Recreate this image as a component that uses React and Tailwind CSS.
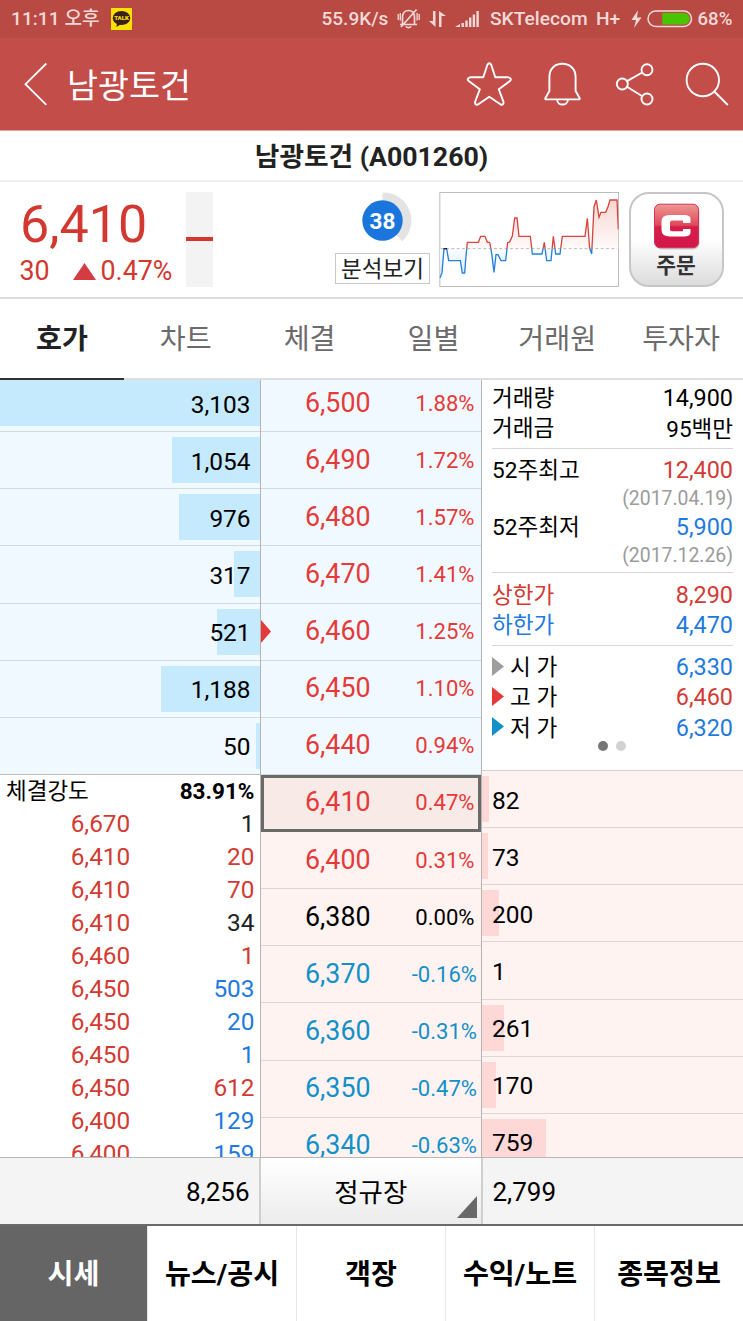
import React from "react";

const RED = "text-[#e53a3a]";
const BLUE = "text-[#1490c8]";
const BLACK = "text-black";

const asks = [
  { qty: "3,103", width: 260 },
  { qty: "1,054", width: 88 },
  { qty: "976", width: 81 },
  { qty: "317", width: 26 },
  { qty: "521", width: 43 },
  { qty: "1,188", width: 99 },
  { qty: "50", width: 4 },
];

const levels = [
  { price: "6,500", pct: "1.88%", color: RED, side: "ask" },
  { price: "6,490", pct: "1.72%", color: RED, side: "ask" },
  { price: "6,480", pct: "1.57%", color: RED, side: "ask" },
  { price: "6,470", pct: "1.41%", color: RED, side: "ask" },
  { price: "6,460", pct: "1.25%", color: RED, side: "ask", marker: true },
  { price: "6,450", pct: "1.10%", color: RED, side: "ask" },
  { price: "6,440", pct: "0.94%", color: RED, side: "ask" },
  { price: "6,410", pct: "0.47%", color: RED, side: "bid", current: true },
  { price: "6,400", pct: "0.31%", color: RED, side: "bid" },
  { price: "6,380", pct: "0.00%", color: BLACK, side: "bid" },
  { price: "6,370", pct: "-0.16%", color: BLUE, side: "bid" },
  { price: "6,360", pct: "-0.31%", color: BLUE, side: "bid" },
  { price: "6,350", pct: "-0.47%", color: BLUE, side: "bid" },
  { price: "6,340", pct: "-0.63%", color: BLUE, side: "bid" },
];

const bids = [
  { qty: "82", width: 7 },
  { qty: "73", width: 6 },
  { qty: "200", width: 17 },
  { qty: "1", width: 0 },
  { qty: "261", width: 22 },
  { qty: "170", width: 14 },
  { qty: "759", width: 64 },
];

const TRADE_RED = "text-[#d23b34]";
const TRADE_BLUE = "text-[#1f7ae0]";
const trades = [
  { price: "6,670", qty: "1", color: "text-[#222]" },
  { price: "6,410", qty: "20", color: TRADE_RED },
  { price: "6,410", qty: "70", color: TRADE_RED },
  { price: "6,410", qty: "34", color: "text-[#222]" },
  { price: "6,460", qty: "1", color: TRADE_RED },
  { price: "6,450", qty: "503", color: TRADE_BLUE },
  { price: "6,450", qty: "20", color: TRADE_BLUE },
  { price: "6,450", qty: "1", color: TRADE_BLUE },
  { price: "6,450", qty: "612", color: TRADE_RED },
  { price: "6,400", qty: "129", color: TRADE_BLUE },
  { price: "6,400", qty: "159", color: TRADE_BLUE },
];

function StatusBar() {
  return (
    <div className="flex h-[38px] shrink-0 items-center bg-[#b84a43] text-[18.600px] font-medium leading-[40px] text-[#f2d9d7]">
      <span className="ml-[11px] w-[92px] shrink-0 whitespace-pre text-[19.200px]">11:11 오후</span>
      <svg className="ml-[8px] shrink-0" width="21" height="22" viewBox="0 0 21 22">
        <rect width="21" height="22" fill="#fae100" />
        <ellipse cx="10.500" cy="10" rx="8.800" ry="7" fill="#3c1e1e" />
        <path d="M6 15l-.6 4 4.600-2.800z" fill="#3c1e1e" />
        <text x="10.500" y="12.300" fontSize="6" fontWeight="900" textAnchor="middle" fill="#fae100" fontFamily="Roboto, sans-serif">TALK</text>
      </svg>
      <span className="ml-[189.500px] w-[69px] shrink-0 text-[19px]">55.9K/s</span>
      <svg className="ml-[6.500px] shrink-0" width="24" height="22" viewBox="0 0 24 22" fill="none" stroke="#f2d9d7" strokeWidth="1.700">
        <path d="M3 16.500h17M5.500 16V8.500C6 4 8.500 2.500 11.500 2.500s5.500 1.500 6 6V16M9 18.300c1 1.800 4 1.800 5 0M19.500 1.500L4 19" />
        <path d="M1.200 6v6M3.300 5v7.500M22.200 6v6M20.100 5v7.500" strokeWidth="1.300" />
      </svg>
      <svg className="ml-[7px] shrink-0" width="19" height="18" viewBox="0 0 19 18" fill="#f2d9d7">
        <path d="M5 1h2.500v16L1 11h4zM11 17h2.500V6H18L11 1z" />
      </svg>
      <svg className="ml-[8px] shrink-0" width="25" height="17" viewBox="0 0 25 17" fill="#f2d9d7">
        <path d="M0 16l5-3v3zM6.500 12h2.400v4H6.500zM10.300 9.500h2.400V16h-2.400zM14 6.500h2.400V16H14zM17.700 3.500h2.400V16h-2.400zM21.400 0h2.400v16h-2.400z" />
      </svg>
      <span className="ml-[10px] w-[99px] shrink-0 text-[19.200px]">SKTelecom</span>
      <span className="ml-[7px] w-[26px] shrink-0 text-[19.200px]">H+</span>
      <svg className="ml-[8.500px] shrink-0" width="11" height="18" viewBox="0 0 11 18" fill="#f2d9d7">
        <path d="M7 0L.5 10H5L3 18l7.500-10.500H6z" />
      </svg>
      <svg className="ml-[5px] shrink-0" width="46" height="18" viewBox="0 0 46 18">
        <rect x="1" y="1" width="43.500" height="15.500" rx="7.750" fill="none" stroke="#f2d9d7" strokeWidth="1.500" />
        <path d="M15.300 3H37a5.750 5.750 0 0 1 0 11.500H15.300z" fill="#4bc400" />
      </svg>
      <span className="ml-[5px] shrink-0">68%</span>
    </div>
  );
}

function TitleBar() {
  return (
    <div className="flex h-[93px] shrink-0 items-start border-b border-[#e3a5a2] bg-[#c34d48] text-white">
      <svg className="ml-[23px] mt-[24px] shrink-0" width="25" height="45" viewBox="23 62 25 45" fill="none" stroke="white" strokeWidth="1.800">
        <path d="M46.300 63.500L25.500 84.200L46.300 104.800" />
      </svg>
      <h1 className="ml-[19px] mt-[29px] w-[398px] shrink-0 text-[33.700px] font-normal leading-[40px]">남광토건</h1>
      <svg className="mt-[22px] shrink-0" width="267" height="48" viewBox="465 60 267 48" fill="none" stroke="white" strokeWidth="1.900" strokeLinejoin="round">
        <path d="M487.400 64.800Q489.300 61.700 491.200 64.800L495.300 77.300L508.500 77.300Q512 78.200 510.200 80.800L498.800 89.300L503.500 101.800Q503.800 105.500 500.700 104.500L489.300 96.800L477.900 104.500Q474.800 105.500 475.100 101.800L479.800 89.300L468.400 80.800Q466.600 78.200 470.100 77.300L483.300 77.300Z" />
        <path d="M549.400 91V77C549.400 68.500 555 63.800 562.300 63.800S575.600 68.500 575.600 77V91L579.600 98Q580 99.400 579 99.400H546Q545 99.400 545.400 98ZM557.200 100.200C557.500 106 567.500 106 567.800 100.200" />
        <circle cx="622.300" cy="84" r="5.500" />
        <circle cx="647" cy="69.700" r="5.500" />
        <circle cx="647" cy="99" r="5.500" />
        <path d="M627 81.200L642.300 72.500M627 86.800L642.300 96.200" />
        <circle cx="702.800" cy="80" r="16.200" />
        <path d="M714.300 91.500L727.800 105" />
      </svg>
    </div>
  );
}

const LINE =
  "M207 294L213 278L219 206L227 206L233 242L268 242L274 279L281 279L284 240L289 187L322 187L329 169L342 169L349 187L356 187L362 220L369 277L375 224L381 224L390 242L404 242L410 188L416 186L424 168L431 114L438 114L444 169L478 169L484 222L513 222L520 187L527 242L540 242L547 169L554 222L567 222L574 169L642 169L649 115L656 205L662 222L669 80L676 60L684 112L690 97L704 97L711 80L717 60L738 60L742 148";

function Sparkline() {
  return (
    <svg className="mt-[10px] shrink-0" width="180" height="95" viewBox="204 36 540 285">
      <defs>
        <clipPath id="upper"><rect x="207" y="36" width="536" height="170" /></clipPath>
        <clipPath id="lower"><rect x="205" y="206" width="538" height="115" /></clipPath>
        <linearGradient id="rise" gradientUnits="userSpaceOnUse" x1="0" y1="60" x2="0" y2="206">
          <stop offset="0" stopColor="#f6d6d2" />
          <stop offset="1" stopColor="#fffaf9" />
        </linearGradient>
        <linearGradient id="fall" gradientUnits="userSpaceOnUse" x1="0" y1="206" x2="0" y2="290">
          <stop offset="0" stopColor="#fbfdff" />
          <stop offset="1" stopColor="#d8eafa" />
        </linearGradient>
      </defs>
      <rect x="206.500" y="37.500" width="536" height="282" fill="white" stroke="#bdbdbd" strokeWidth="3" />
      <path d={LINE + "L742 206L207 206Z"} fill="url(#rise)" clipPath="url(#upper)" />
      <path d={LINE + "L742 206L207 206Z"} fill="url(#fall)" clipPath="url(#lower)" />
      <path d="M209 206H738" stroke="#b8b8b8" strokeWidth="3" strokeDasharray="9 7" />
      <path d={LINE} fill="none" stroke="#d8453e" strokeWidth="4" clipPath="url(#upper)" />
      <path d={LINE} fill="none" stroke="#2581dc" strokeWidth="4" clipPath="url(#lower)" />
      <path d="M218 206H228" stroke="#222" strokeWidth="4" />
    </svg>
  );
}

function Summary() {
  return (
    <div className="flex h-[117px] shrink-0 items-start border-b-2 border-[#dcdcdc]">
      <div className="w-[186px] shrink-0 text-[#d23830]">
        <div className="ml-[20px] mt-[12px] text-[52px] leading-[61px]">6,410</div>
        <div className="-mt-[1px] ml-[19.500px] flex items-center text-[26.800px] leading-[34px]">
          <span className="w-[53px]">30</span>
          <svg width="23" height="17" viewBox="0 0 23 17"><path d="M11.500 0L23 17H0z" fill="#d33c43" /></svg>
          <span className="ml-[5px]">0.47%</span>
        </div>
      </div>
      <div className="mt-[10px] h-[95px] w-[27px] shrink-0 bg-[#f3f3f3] pt-[45px]">
        <div className="h-[4px] bg-[#d23830]" />
      </div>
      <div className="ml-[122px] mt-[10px] flex w-[95px] shrink-0 flex-col items-center">
        <svg width="58" height="58" viewBox="-28.500 -28.500 58 58">
          <path d="M0 -28A28 28 0 0 1 19.700 20.700L0 0Z" fill="#e3e3e3" />
          <circle r="20.200" fill="#1a76dc" />
          <text y="8" textAnchor="middle" fontSize="22.500" fontWeight="700" fill="white" fontFamily="Roboto, sans-serif">38</text>
        </svg>
        <div className="mt-[3px] h-[31px] w-[95px] border border-[#c8c8c8] text-center text-[22.500px] leading-[30px] text-[#222]">분석보기</div>
      </div>
      <div className="ml-[9px] flex shrink-0">
        <Sparkline />
      </div>
      <button className="ml-[10px] mt-[10px] flex h-[95px] w-[95px] shrink-0 flex-col items-center rounded-[20px] border-2 border-[#c6c6c6] bg-gradient-to-b from-white via-white to-[#dcdcdc] pt-[9px]">
        <svg width="48" height="48" viewBox="0 0 48 48">
          <defs>
            <linearGradient id="badge" x1="0" y1="0" x2="0" y2="1">
              <stop offset="0" stopColor="#ec9a93" />
              <stop offset="0.480" stopColor="#e0485c" />
              <stop offset="0.520" stopColor="#d71e49" />
              <stop offset="1" stopColor="#d2164a" />
            </linearGradient>
          </defs>
          <rect x="2.500" y="2.500" width="44" height="44" rx="6" fill="#00000030" />
          <rect x="1.500" y="1.200" width="44" height="43.500" rx="5.500" fill="url(#badge)" stroke="#d9305a" />
          <path d="M37.500 20V15.500Q37.500 12 31 12H17Q8.500 12 8.500 18V27Q8.500 33.500 17 33.500H31Q37.500 33.500 37.500 29.500V26H30V28.200H19Q17 28.200 17 26V19.500Q17 17.500 19 17.500H30V20Z" fill="white" />
        </svg>
        <span className="-ml-[1px] text-[21.500px] font-bold leading-[29px] text-[#333]">주문</span>
      </button>
    </div>
  );
}

function Tabs() {
  const items = ["호가", "차트", "체결", "일별", "거래원", "투자자"];
  return (
    <div className="grid h-[81px] shrink-0 grid-cols-6 text-center text-[28.200px] leading-[82px] text-[#6b6b6b]">
      {items.map((t, i) => (
        <div key={t} className={i === 0 ? "h-[81px] border-b-2 border-[#333] font-bold text-[#222]" : "h-[81px] border-b-2 border-[#dedede]"}>{t}</div>
      ))}
    </div>
  );
}

function LeftColumn() {
  return (
    <div className="w-[261px] shrink-0 border-r border-[#b4b4b4]">
      <div className="-mt-[5px]">
        {asks.map((a, i) => (
          <div key={i} className={`relative flex h-[57.130px] items-center justify-end border-b bg-[#f0f9ff] ${i === 6 ? "border-[#bdbdbd]" : "border-[#d3dadd]"}`}>
            <div className="h-[46px] bg-[#c5e9fd]" style={{ width: a.width }} />
            <span className="absolute right-[9.500px] top-[14.500px] text-[24.400px] leading-[30px] text-black">{a.qty}</span>
          </div>
        ))}
      </div>
      <div className="flex h-[32px] items-center justify-between pl-[6px] pr-[5.500px] text-black">
        <span className="mt-[1px] text-[22.500px] leading-[34px]">체결강도</span>
        <span className="mt-[1px] text-[22.500px] font-bold leading-[34px]">83.91%</span>
      </div>
      {trades.map((t, i) => (
        <div key={i} className="flex h-[33px] justify-between pr-[5.500px] text-[24.400px] leading-[33px]">
          <span className="w-[130.300px] text-right text-[#d23b34]">{t.price}</span>
          <span className={t.color}>{t.qty}</span>
        </div>
      ))}
    </div>
  );
}

function PriceColumn() {
  return (
    <div className="w-[221px] shrink-0 border-r border-[#b4b4b4]">
      <div className="-mt-[5px]">
        {levels.map((l, i) => {
          const tone = l.current
            ? "outline-[3px] -outline-offset-3 outline-[#6a6a68] outline-solid bg-[#f8eae7] border-[#d8cfce]"
            : l.side === "ask"
              ? "bg-[#f0f9ff] border-[#d3dadd]"
              : "bg-[#fff3f2] border-[#dfd5d5]";
          return (
            <div key={i} className={`relative flex h-[57.130px] items-center border-b ${tone} ${l.color}`}>
              {l.marker && (
                <svg className="absolute left-0 top-[16px]" width="10" height="23" viewBox="0 0 10 23"><path d="M0 0L10 11.500L0 23z" fill="#e53a3a" /></svg>
              )}
              <span className="-mt-[1px] w-[109.500px] text-right text-[26.800px] leading-[32px]">{l.price}</span>
              <span className={`-mt-[1px] ml-auto text-[22.100px] leading-[30px] ${l.pct[0] === "-" ? "pr-[4px]" : "pr-[6.500px]"}`}>{l.pct}</span>
            </div>
          );
        })}
      </div>
    </div>
  );
}

function Row({ label, value, color = "text-black", labelColor = "text-black", mark, small }) {
  return (
    <div className="flex h-[30.250px] items-center leading-[30px]">
      {mark && (
        <svg className="-mt-[2px] mr-[6px]" width="12" height="19" viewBox="0 0 12 19"><path d="M0 0L12 9.500L0 19z" fill={mark} /></svg>
      )}
      <span className={`mt-[2px] text-[22.600px] ${labelColor}`}>{label}</span>
      <span className={`ml-auto ${small ? "mt-[2px] text-[22.500px]" : "text-[23.400px]"} ${color}`}>{value}</span>
    </div>
  );
}

function InfoPanel() {
  const red = "text-[#d23b34]";
  const blue = "text-[#1f7ae0]";
  return (
    <div className="flex h-[390px] flex-col pl-[10px] pr-[10px] pt-[3px]">
      <Row label="거래량" value="14,900" />
      <Row label="거래금" value="95백만" small />
      <div className="mb-[6px] mt-[4.500px] h-px shrink-0 bg-[#d6d6d6]" />
      <Row label="52주최고" value="12,400" color={red} />
      <div className="h-[26.250px] text-right text-[19.400px] leading-[27px] text-[#9b9b9b]">(2017.04.19)</div>
      <Row label="52주최저" value="5,900" color={blue} />
      <div className="h-[26.250px] text-right text-[19.400px] leading-[27px] text-[#9b9b9b]">(2017.12.26)</div>
      <div className="mb-[7.500px] mt-[3.500px] h-px shrink-0 bg-[#d6d6d6]" />
      <Row label="상한가" value="8,290" color={red} labelColor={red} />
      <Row label="하한가" value="4,470" color={blue} labelColor={blue} />
      <div className="mb-[6.500px] mt-[4px] h-px shrink-0 bg-[#d6d6d6]" />
      <Row label="시 가" value="6,330" color={blue} mark="#9e9e9e" />
      <Row label="고 가" value="6,460" color={red} mark="#e53a3a" />
      <Row label="저 가" value="6,320" color={blue} mark="#1490c8" />
      <div className="-mt-[1.500px] flex justify-center gap-[8px] pr-[1px]">
        <div className="h-[10px] w-[10px] rounded-full bg-[#767676]" />
        <div className="h-[10px] w-[10px] rounded-full bg-[#d2d2d2]" />
      </div>
    </div>
  );
}

function RightColumn() {
  return (
    <div className="min-w-0 flex-1">
      <InfoPanel />
      <div className="border-t border-[#d8d0d0]">
        {bids.map((b, i) => (
          <div key={i} className="relative flex h-[57.130px] items-center border-b border-[#ddd4d4] bg-[#fff3f2]">
            <div className="h-[46px] bg-[#fed7d7]" style={{ width: b.width }} />
            <span className="absolute left-[10px] top-[14.500px] text-[24.500px] leading-[30px] text-black">{b.qty}</span>
          </div>
        ))}
      </div>
    </div>
  );
}

function Totals() {
  return (
    <div className="flex h-[67px] shrink-0 border-t border-[#b8b8b8] bg-[#f4f4f4] text-[26px] leading-[68px] text-black">
      <div className="w-[259px] pr-[9.500px] text-right">8,256</div>
      <div className="relative w-[223.500px] border-x-2 border-[#cfcfcf] bg-gradient-to-b from-white to-[#ececec] text-center text-[26.500px] leading-[69px]">
        정규장
        <svg className="absolute bottom-[6px] right-[3.500px]" width="20" height="22" viewBox="0 0 20 22"><path d="M20 0V22H0z" fill="#686868" /></svg>
      </div>
      <div className="pl-[10px]">2,799</div>
    </div>
  );
}

function BottomNav() {
  const items = ["시세", "뉴스/공시", "객장", "수익/노트", "종목정보"];
  return (
    <div className="grid h-[97px] shrink-0 grid-cols-[147px_149px_149px_149px_149px] border-t-2 border-[#6a6a6a] bg-white text-center text-[28.200px] font-bold leading-[98px]">
      {items.map((t, i) => (
        <div key={t} className={i === 0 ? "bg-[#656565] text-white" : "border-l border-[#e6e6e6] text-black"}>{t}</div>
      ))}
    </div>
  );
}

export default function App() {
  return (
    <div className="flex h-[1321px] w-[743px] flex-col overflow-hidden bg-white font-[Roboto,'Noto_Sans_CJK_KR',sans-serif]">
      <StatusBar />
      <TitleBar />
      <div className="h-[51px] shrink-0 border-b-2 border-[#efefef] text-center text-[26.700px] font-bold leading-[52px] text-[#222]">남광토건 (A001260)</div>
      <Summary />
      <Tabs />
      <div className="flex h-[777px] shrink-0 overflow-hidden">
        <LeftColumn />
        <PriceColumn />
        <RightColumn />
      </div>
      <Totals />
      <BottomNav />
    </div>
  );
}
